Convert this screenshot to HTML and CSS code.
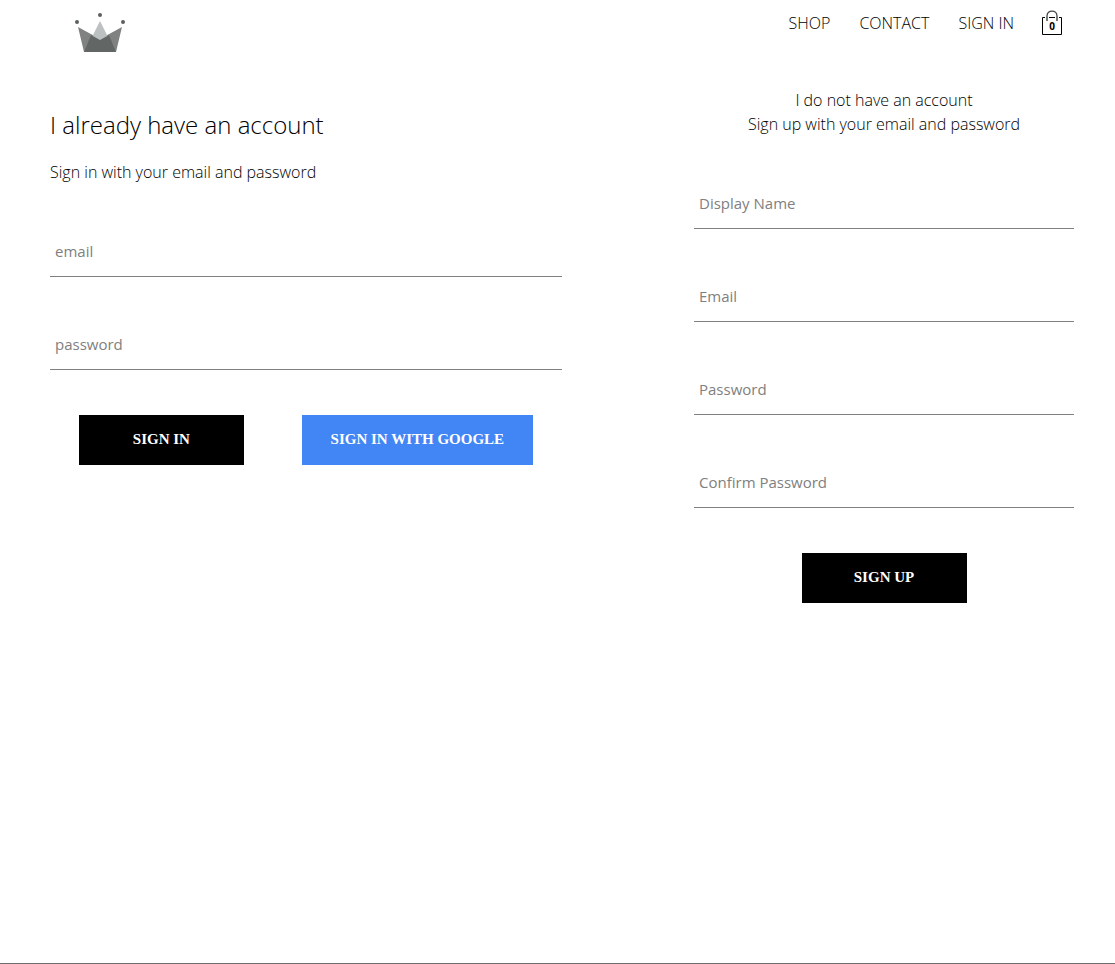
FILE: index.html
```html
<!DOCTYPE html>
<html lang="en">
<head>
  <meta charset="utf-8">
  <title>Sign in</title>
  <link rel="stylesheet" href="styles.css">
</head>
<body>
  <header class="header">
    <a class="logo" href="#">
      <svg width="50" height="39" viewBox="0 0 50 39">
        <path fill="#808282" d="M3 14 25 26 47 14 41 39H9z"/>
        <path fill="#bdc0c0" d="M25 8 34 26 25 31 16 26z"/>
        <path fill="#626766" d="M16 22 25 27 34 22 41 39H9z"/>
        <circle fill="#5b5f5f" cx="2" cy="9" r="2"/>
        <circle fill="#5b5f5f" cx="25" cy="2" r="2"/>
        <circle fill="#5b5f5f" cx="48" cy="9" r="2"/>
      </svg>
    </a>
    <nav class="nav">
      <a class="nav-link" href="#">SHOP</a>
      <a class="nav-link" href="#">CONTACT</a>
      <a class="nav-link" href="#">SIGN IN</a>
      <button class="cart" type="button">
        <svg width="22" height="26" viewBox="0 0 22 26" fill="none">
          <path stroke="#000" d="M1.500 7.500h19v17h-19z"/>
          <path stroke="#fff" stroke-width="3" d="M4 7.500h4M14 7.500h4"/>
          <path stroke="#444" stroke-width="1.300" d="M6 10V6c0-6.500 10-6.500 10 0v4"/>
          <path stroke="#777" stroke-width="2" d="M6 7v4M16 7v4"/>
        </svg>
        <span class="cart-count">0</span>
      </button>
    </nav>
  </header>

  <main class="accounts">
    <section class="sign-in">
      <h2 class="title">I already have an account</h2>
      <p class="intro">Sign in with your email and password</p>
      <form class="form">
        <div class="field">
          <input class="input" id="in-email" type="email">
          <label class="label" for="in-email">email</label>
        </div>
        <div class="field">
          <input class="input" id="in-password" type="password">
          <label class="label" for="in-password">password</label>
        </div>
        <div class="actions">
          <button class="button" type="submit">SIGN IN</button>
          <button class="button google" type="button">SIGN IN WITH GOOGLE</button>
        </div>
      </form>
    </section>

    <section class="sign-up">
      <p class="intro">I do not have an account</p>
      <p class="intro">Sign up with your email and password</p>
      <form class="form">
        <div class="field">
          <input class="input" id="up-name" type="text">
          <label class="label" for="up-name">Display Name</label>
        </div>
        <div class="field">
          <input class="input" id="up-email" type="email">
          <label class="label" for="up-email">Email</label>
        </div>
        <div class="field">
          <input class="input" id="up-password" type="password">
          <label class="label" for="up-password">Password</label>
        </div>
        <div class="field">
          <input class="input" id="up-confirm" type="password">
          <label class="label" for="up-confirm">Confirm Password</label>
        </div>
        <div class="actions">
          <button class="button" type="submit">SIGN UP</button>
        </div>
      </form>
    </section>
  </main>
</body>
</html>
```

FILE: styles.css
```css
* {
  box-sizing: border-box;
}

body {
  min-height: 100vh;
  margin: 0;
  border-bottom: 1px solid #6e6e6e;
  background: #fff;
  color: #000;
  font-family: "Segoe UI", "Open Sans", sans-serif;
  font-size: 16px;
  font-weight: 300;
  line-height: 24px;
}

.header {
  display: flex;
  justify-content: space-between;
  align-items: flex-start;
  padding: 10px 52px 0 75px;
}

.logo {
  display: flex;
  padding-top: 3px;
}

.nav {
  display: flex;
  align-items: center;
  gap: 29px;
}

.nav-link {
  color: inherit;
  text-decoration: none;
}

.cart {
  position: relative;
  display: flex;
  margin-left: -2px;
  padding: 0;
  border: 0;
  background: none;
  color: #000;
}

.cart-count {
  position: absolute;
  top: 10px;
  left: 0;
  width: 100%;
  font: bold 10px/12px "Open Sans", sans-serif;
  text-align: center;
}

.accounts {
  display: flex;
  justify-content: space-between;
  align-items: flex-start;
  padding: 36px 41px 0 50px;
}

.sign-in {
  width: 50%;
  padding-top: 20px;
}

.sign-up {
  width: 380px;
}

.title {
  margin: 0 0 18px;
  font-size: 24px;
  font-weight: 300;
  line-height: 34px;
}

.intro {
  margin: 0;
}

.sign-up .intro {
  text-align: center;
}

.form {
  display: flex;
  flex-direction: column;
  gap: 45px;
  margin-top: 45px;
}

.field {
  position: relative;
}

.input {
  display: block;
  width: 100%;
  height: 48px;
  padding: 10px 5px;
  border: 0;
  border-bottom: 1px solid #808080;
  background: none;
  font: inherit;
}

.label {
  position: absolute;
  top: 10px;
  left: 5px;
  color: #808080;
  font-size: 15px;
  font-weight: 400;
  pointer-events: none;
}

.actions {
  display: flex;
  justify-content: space-around;
}

.button {
  min-width: 165px;
  height: 50px;
  padding: 0 29px 2px;
  border: 0;
  background: #000;
  color: #fff;
  font: bold 15px/48px "Liberation Serif", serif;
}

.google {
  background: #4285f4;
}
```
